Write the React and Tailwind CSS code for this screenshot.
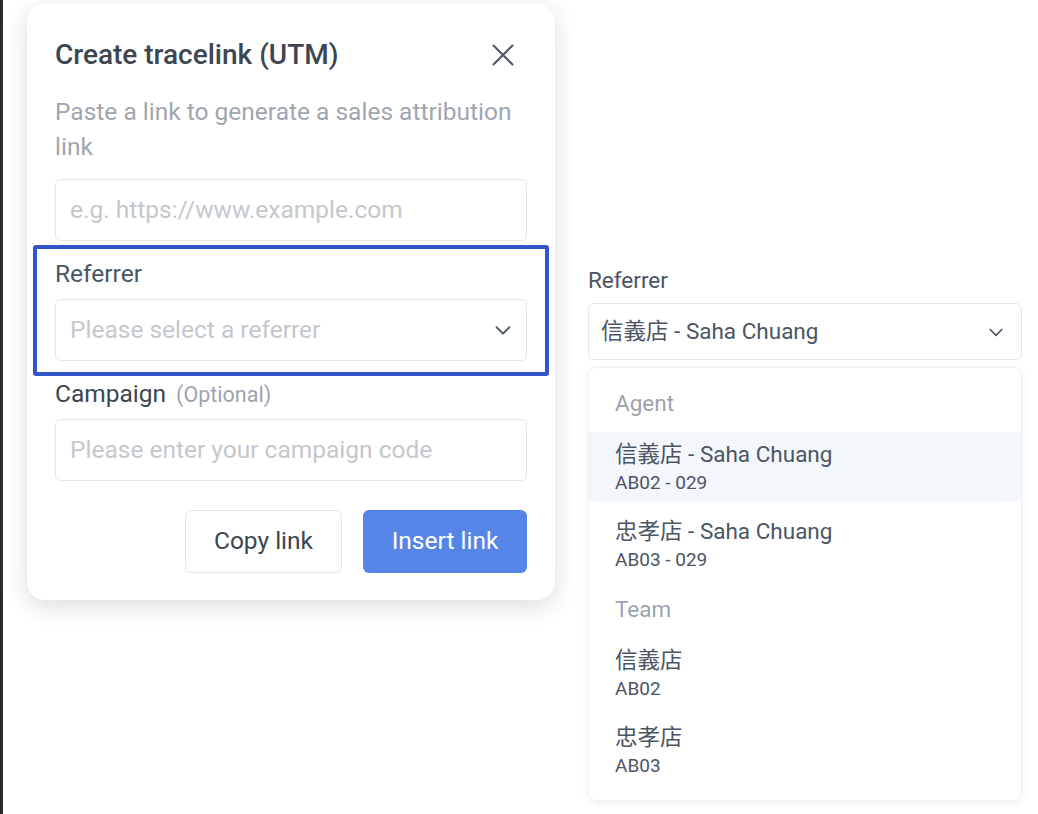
import React from "react";

function Chevron({ className }) {
  return (
    <svg viewBox="0 0 24 24" className={className} fill="none" stroke="currentColor" strokeWidth="2" strokeLinecap="round" strokeLinejoin="round">
      <path d="M5 9l7 7 7-7" />
    </svg>
  );
}

function CloseIcon() {
  return (
    <svg viewBox="0 0 22 22" className="w-[22px] h-[22px] text-[#4b5563]" fill="none" stroke="currentColor" strokeWidth="2" strokeLinecap="round">
      <path d="M1.5 1.5l19 19M20.5 1.5l-19 19" />
    </svg>
  );
}

function Option({ title, sub, active }) {
  return (
    <div className={"px-[26px] pt-[8px] pb-[6px] " + (active ? "bg-[#f3f7fb]" : "")}>
      <div className="text-[22.5px] leading-[28px] text-[#4b5563]">{title}</div>
      <div className="text-[19px] leading-[24px] text-[#4b5563] mt-[3px]">{sub}</div>
    </div>
  );
}

export default function App() {
  const font = { fontFamily: "Roboto, 'Noto Sans CJK TC', sans-serif" };
  return (
    <div className="flex min-h-[814px] w-[1038px] bg-white overflow-hidden" style={font}>
      <div className="w-[3px] bg-[#2b2b2b] shrink-0" />
      <div className="pl-[24px] pt-[4px] shrink-0">
        <div className="w-[528px] bg-white rounded-[18px] shadow-[0_6px_24px_rgba(0,0,0,0.14)] pt-[31px] pb-[27px]">
          <div className="flex items-center justify-between pl-[28px] pr-[41px]">
            <div className="text-[28px] leading-[40px] font-medium text-[#3d4651]">Create tracelink (UTM)</div>
            <CloseIcon />
          </div>
          <div className="px-[28px] mt-[19px] text-[24.5px] leading-[35px] text-[#a0a6ae]">
            Paste a link to generate a sales attribution link
          </div>
          <div className="px-[28px] mt-[15px]">
            <div className="h-[62px] border border-[#e5e7eb] rounded-[6px] flex items-center px-[14px] text-[24.5px] text-[#c4c8ce]">
              e.g. https://www.example.com
            </div>
          </div>
          <div className="mx-[6px] mt-[4px] border-[4px] border-[#3355cc] rounded-[3px] pt-[10px] pb-[11px] px-[18px]">
            <div className="text-[24.5px] leading-[30px] text-[#4b5563]">Referrer</div>
            <div className="mt-[10px] h-[62px] border border-[#e5e7eb] rounded-[6px] flex items-center justify-between pl-[14px] pr-[12px] text-[24.5px] text-[#c4c8ce]">
              <span>Please select a referrer</span>
              <Chevron className="w-[22px] h-[22px] text-[#4b5563]" />
            </div>
          </div>
          <div className="px-[28px] mt-[3px] flex items-baseline gap-[10px]">
            <span className="text-[24.5px] leading-[30px] text-[#3d4651]">Campaign</span>
            <span className="text-[21.5px] text-[#9ca3af]">(Optional)</span>
          </div>
          <div className="px-[28px] mt-[8px]">
            <div className="h-[62px] border border-[#e5e7eb] rounded-[6px] flex items-center px-[14px] text-[24.5px] text-[#c4c8ce]">
              Please enter your campaign code
            </div>
          </div>
          <div className="px-[28px] mt-[29px] flex justify-end gap-[21px]">
            <div className="w-[157px] h-[63px] border border-[#e5e7eb] rounded-[6px] flex items-center justify-center text-[24.5px] text-[#3d4651]">
              Copy link
            </div>
            <div className="w-[164px] h-[63px] bg-[#5585e7] rounded-[6px] flex items-center justify-center text-[24.5px] text-white">
              Insert link
            </div>
          </div>
        </div>
      </div>
      <div className="ml-[33px] pt-[265px] w-[434px] shrink-0">
        <div className="text-[22.5px] leading-[30px] text-[#4b5563]">Referrer</div>
        <div className="mt-[8px] h-[57px] border border-[#e5e7eb] rounded-[6px] flex items-center justify-between pl-[12px] pr-[15px] text-[22.5px] text-[#4b5563]">
          <span>信義店 - Saha Chuang</span>
          <Chevron className="w-[20px] h-[20px] text-[#4b5563]" />
        </div>
        <div className="mt-[7px] border border-[#f0f1f3] rounded-[8px] shadow-[0_2px_8px_rgba(0,0,0,0.06)] pt-[20px] pb-[16px] flex flex-col">
          <div className="px-[26px] text-[22.5px] leading-[30px] text-[#9ca3af]">Agent</div>
          <div className="mt-[14px] flex flex-col gap-[8px]">
            <Option title="信義店 - Saha Chuang" sub="AB02 - 029" active />
            <Option title="忠孝店 - Saha Chuang" sub="AB03 - 029" />
          </div>
          <div className="px-[26px] mt-[16px] text-[22.5px] leading-[30px] text-[#9ca3af]">Team</div>
          <div className="mt-[14px] flex flex-col gap-[8px]">
            <Option title="信義店" sub="AB02" />
            <Option title="忠孝店" sub="AB03" />
          </div>
        </div>
      </div>
    </div>
  );
}
